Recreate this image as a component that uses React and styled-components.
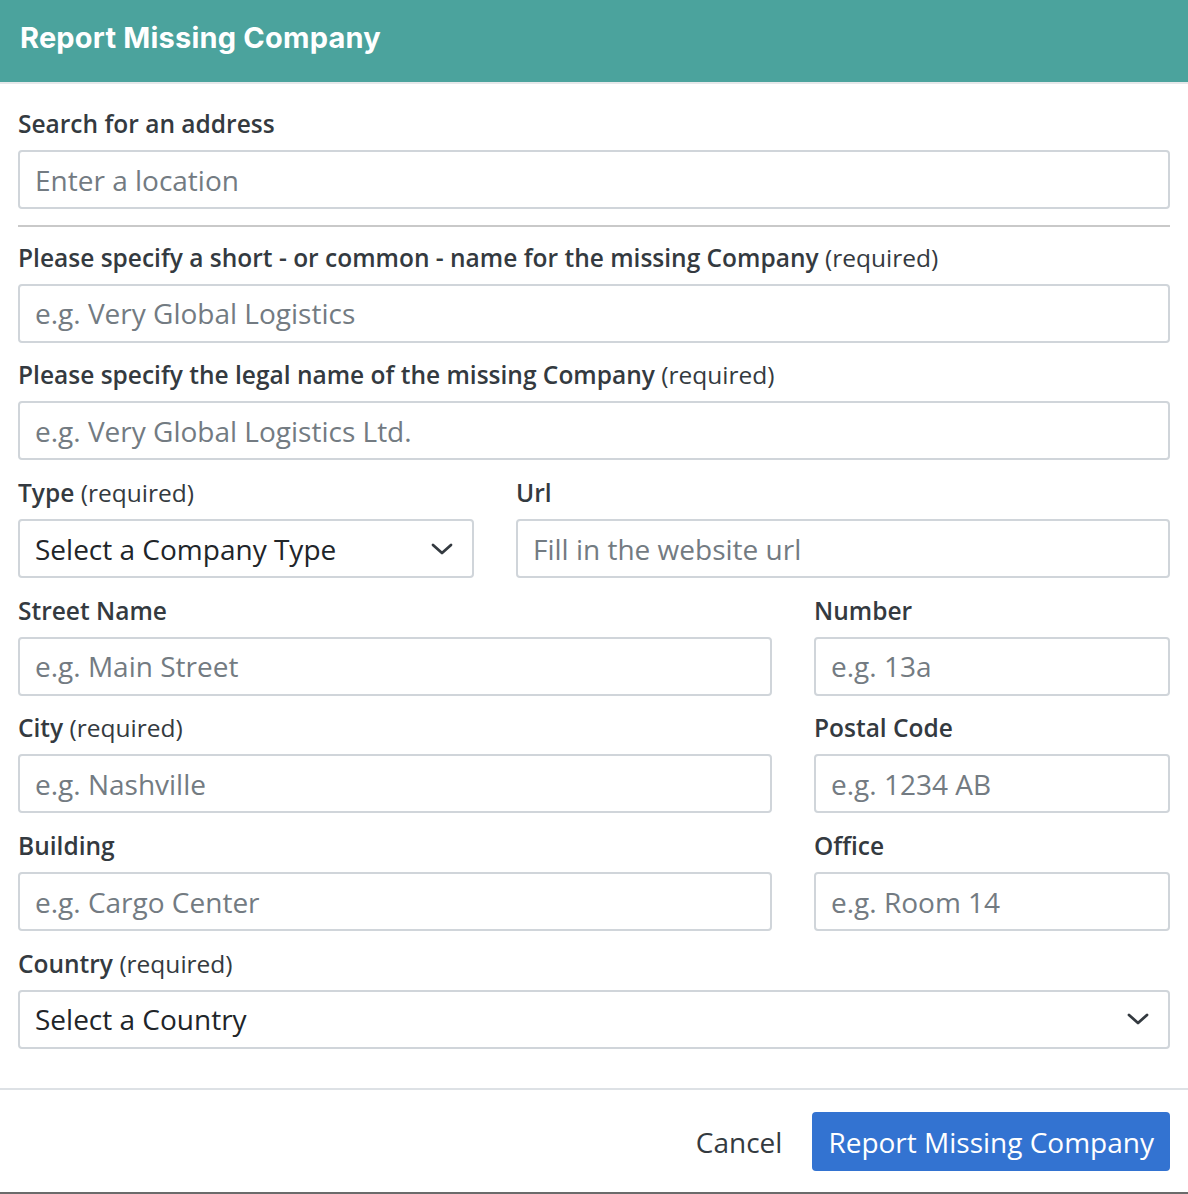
import React from 'react'
import styled, { createGlobalStyle } from 'styled-components'

const GlobalStyle = createGlobalStyle`
  html, body {
    margin: 0;
    padding: 0;
    background: #fff;
  }
  body {
    font-family: 'Open Sans', 'Liberation Sans', sans-serif;
  }
  * { box-sizing: border-box; }
`

const Modal = styled.div`
  width: 1188px;
  height: 1194px;
  background: #fff;
  border-bottom: 2px solid #6b6b6b;
  display: flex;
  flex-direction: column;
`

const Header = styled.div`
  height: 84px;
  background: #4ba39d;
  border-bottom: 2px solid #e6e8ea;
  padding: 0 20px;
  display: flex;
  align-items: center;
`

const Title = styled.h1`
  margin: 0 0 8px;
  color: #fff;
  font-family: Inter, 'Open Sans', sans-serif;
  font-weight: 700;
  font-size: 29px;
  letter-spacing: 0.2px;
`

const Body = styled.div`
  padding: 23px 18px 0;
  flex: 1;
`

const Group = styled.div`
  margin-bottom: 15.7px;
`

const Label = styled.label`
  display: block;
  height: 34px;
  line-height: 34px;
  margin-bottom: 9px;
  color: #343a40;
  font-size: 24.5px;
  font-weight: 600;
  white-space: nowrap;
`

const Hint = styled.span`
  font-weight: 400;
`

const Input = styled.input`
  display: block;
  width: 100%;
  height: 59px;
  padding: 0 15px;
  border: 2px solid #d0d5da;
  border-radius: 4px;
  font-family: 'Open Sans', sans-serif;
  font-size: 28px;
  color: #212529;
  background: #fff;
  outline: none;
  &::placeholder {
    color: #737b82;
  }
`

const SelectBox = styled.div`
  height: 59px;
  padding: 0 19px 0 15px;
  border: 2px solid #d0d5da;
  border-radius: 4px;
  display: flex;
  align-items: center;
  justify-content: space-between;
  font-size: 28px;
  color: #212529;
`

const Divider = styled.hr`
  margin: 0 0 14px;
  border: 0;
  border-top: 2px solid #c9c9c9;
`

const Row = styled.div`
  display: grid;
  grid-template-columns: ${p => p.$cols};
  column-gap: 42px;
`

const Footer = styled.div`
  border-top: 2px solid #dde1e5;
  padding: 22px 18px 0;
  height: 104px;
  display: flex;
  justify-content: flex-end;
  align-items: flex-start;
  gap: 30px;
`

const CancelButton = styled.button`
  height: 59px;
  padding: 0;
  border: 0;
  background: none;
  color: #343a40;
  font-family: 'Open Sans', sans-serif;
  font-size: 28px;
`

const PrimaryButton = styled.button`
  height: 59px;
  padding: 0 16px;
  border: 0;
  border-radius: 4px;
  background: #3373d1;
  color: #fff;
  font-family: 'Open Sans', sans-serif;
  font-size: 28px;
`

const Chevron = () => (
  <svg width="22" height="12" viewBox="0 0 22 12" fill="none">
    <path d="M2 2 L11 10 L20 2" stroke="#343a40" strokeWidth="2.8" strokeLinecap="round" strokeLinejoin="round" />
  </svg>
)

function Field({ label, hint, placeholder }) {
  return (
    <Group>
      <Label>
        {label}
        {hint && <Hint> {hint}</Hint>}
      </Label>
      <Input placeholder={placeholder} />
    </Group>
  )
}

function Select({ label, hint, value }) {
  return (
    <Group>
      <Label>
        {label}
        {hint && <Hint> {hint}</Hint>}
      </Label>
      <SelectBox>
        <span>{value}</span>
        <Chevron />
      </SelectBox>
    </Group>
  )
}

export default function App() {
  return (
    <Modal>
      <GlobalStyle />
      <Header>
        <Title>Report Missing Company</Title>
      </Header>
      <Body>
        <Field label="Search for an address" placeholder="Enter a location" />
        <Divider />
        <Field
          label="Please specify a short - or common - name for the missing Company"
          hint="(required)"
          placeholder="e.g. Very Global Logistics"
        />
        <Field
          label="Please specify the legal name of the missing Company"
          hint="(required)"
          placeholder="e.g. Very Global Logistics Ltd."
        />
        <Row $cols="456px 1fr">
          <Select label="Type" hint="(required)" value="Select a Company Type" />
          <Field label="Url" placeholder="Fill in the website url" />
        </Row>
        <Row $cols="754px 1fr">
          <Field label="Street Name" placeholder="e.g. Main Street" />
          <Field label="Number" placeholder="e.g. 13a" />
        </Row>
        <Row $cols="754px 1fr">
          <Field label="City" hint="(required)" placeholder="e.g. Nashville" />
          <Field label="Postal Code" placeholder="e.g. 1234 AB" />
        </Row>
        <Row $cols="754px 1fr">
          <Field label="Building" placeholder="e.g. Cargo Center" />
          <Field label="Office" placeholder="e.g. Room 14" />
        </Row>
        <Select label="Country" hint="(required)" value="Select a Country" />
      </Body>
      <Footer>
        <CancelButton>Cancel</CancelButton>
        <PrimaryButton>Report Missing Company</PrimaryButton>
      </Footer>
    </Modal>
  )
}
